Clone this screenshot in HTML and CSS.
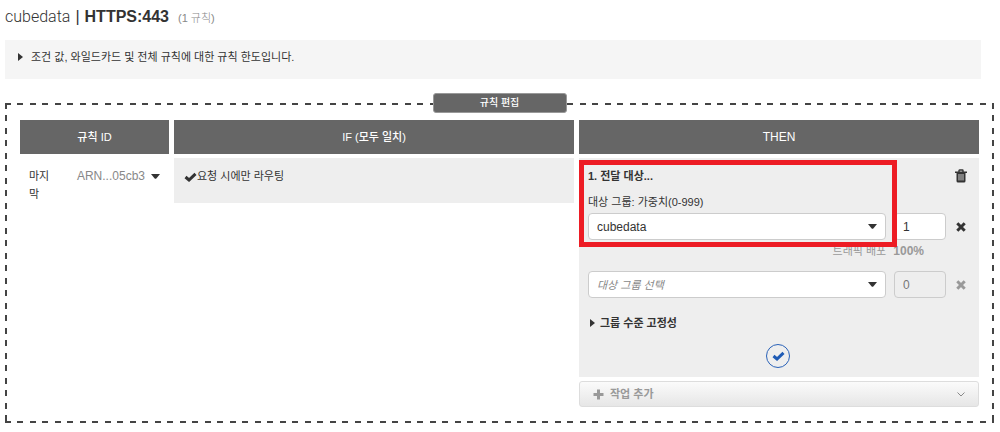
FILE: index.html
```html
<!DOCTYPE html>
<html lang="ko">
<head>
<meta charset="utf-8">
<title>cubedata | HTTPS:443</title>
<link rel="stylesheet" href="styles.css">
</head>
<body>
<main class="page">
  <h1 class="title"><span class="title-name">cubedata</span><span class="title-sep">|</span><strong>HTTPS:443</strong><small>(1 규칙)</small></h1>

  <details class="limits">
    <summary><svg class="tri" viewBox="0 0 5 8" aria-hidden="true"><path d="M0 0L5 4L0 8Z"/></svg>조건 값, 와일드카드 및 전체 규칙에 대한 규칙 한도입니다.</summary>
  </details>

  <section class="editor">
    <h2 class="editor-tag">규칙 편집</h2>
    <table class="rules">
      <colgroup><col class="col-id"><col><col></colgroup>
      <thead>
        <tr><th scope="col">규칙 ID</th><th scope="col">IF (모두 일치)</th><th scope="col" class="latin">THEN</th></tr>
      </thead>
      <tbody>
        <tr>
          <td>
            <div class="rule-id">
              <span class="rule-order">마지막</span>
              <button type="button" class="arn latin">ARN...05cb3<svg class="caret" viewBox="0 0 9 5" aria-hidden="true"><path d="M0 0H9L5.3 4.5Q4.500 5.200 3.700 4.500Z"/></svg></button>
            </div>
          </td>
          <td>
            <div class="condition"><svg class="check" viewBox="0 0 13 10" aria-hidden="true"><path d="M1.500 5L5 8L11.500 1.800"/></svg>요청 시에만 라우팅</div>
          </td>
          <td>
            <div class="action">
              <div class="action-head">
                <h3>1. 전달 대상...</h3>
                <button type="button" class="icon-btn" aria-label="삭제"><svg class="trash" viewBox="0 0 12 14" aria-hidden="true"><path class="trash-body" d="M1.500 4H10.500V12Q10.500 13.500 9 13.500H3Q1.500 13.500 1.500 12Z"/><path class="trash-lid" d="M0 3.300H12M4 3V1.500Q4 1 4.500 1H7.500Q8 1 8 1.500V3"/><path class="trash-slots" d="M4 5V11.500M6 5V11.500M8 5V11.500"/></svg></button>
              </div>
              <label class="group-label" for="group1">대상 그룹: 가중치(0-999)</label>
              <div class="target">
                <span class="select-wrap">
                  <select id="group1" class="field latin"><option>cubedata</option></select>
                  <svg class="caret" viewBox="0 0 9 5" aria-hidden="true"><path d="M0 0H9L5.300 4.500Q4.500 5.200 3.700 4.500Z"/></svg>
                </span>
                <input class="field weight latin" type="text" value="1" aria-label="가중치 1">
                <button type="button" class="icon-btn" aria-label="대상 그룹 제거"><svg class="cross" viewBox="0 0 10 10" aria-hidden="true"><path d="M1.300 1.300L8.700 8.700M8.700 1.300L1.300 8.700"/></svg></button>
              </div>
              <p class="traffic">트래픽 배포 <strong class="latin">100%</strong></p>
              <div class="target">
                <span class="select-wrap">
                  <select class="field placeholder" aria-label="대상 그룹"><option>대상 그룹 선택</option></select>
                  <svg class="caret" viewBox="0 0 9 5" aria-hidden="true"><path d="M0 0H9L5.300 4.500Q4.500 5.200 3.700 4.500Z"/></svg>
                </span>
                <input class="field weight latin" type="text" value="0" aria-label="가중치 2" disabled>
                <button type="button" class="icon-btn" aria-label="대상 그룹 제거" disabled><svg class="cross" viewBox="0 0 10 10" aria-hidden="true"><path d="M1.300 1.300L8.700 8.700M8.700 1.300L1.300 8.700"/></svg></button>
              </div>
              <details class="sticky">
                <summary><svg class="tri" viewBox="0 0 5 8" aria-hidden="true"><path d="M0 0L5 4L0 8Z"/></svg>그룹 수준 고정성</summary>
              </details>
              <button type="button" class="confirm" aria-label="확인"><svg class="check" viewBox="0 0 13 10" aria-hidden="true"><path d="M1.500 5L5 8L11.500 1.800"/></svg></button>
              <span class="highlight"></span>
            </div>
            <button type="button" class="add">
              <svg class="plus" viewBox="0 0 11 11" aria-hidden="true"><path d="M5.500 0.500V10.500M0.500 5.500H10.500"/></svg>
              <span>작업 추가</span>
              <svg class="chevron" viewBox="0 0 8 5" aria-hidden="true"><path d="M0.500 0.500L4 4L7.500 0.500"/></svg>
            </button>
          </td>
        </tr>
      </tbody>
    </table>
  </section>
</main>
</body>
</html>
```
FILE: styles.css
```css
* { box-sizing: border-box; }

body {
  margin: 0;
  background: #fff;
  color: #333;
  font: 11px/18px "Liberation Sans", "Noto Sans CJK KR", sans-serif;
}

h1, h2, h3, p { margin: 0; font-size: inherit; }
button, input, select { font: inherit; color: inherit; }
button { padding: 0; border: 0; background: none; }
svg { display: block; flex: none; }
summary { display: flex; align-items: center; list-style: none; }

.latin { font-size: 12px; }

.page { padding: 7px 6px 8px 5px; }

.title {
  display: flex;
  align-items: baseline;
  font-size: 16px;
  line-height: 20px;
  font-weight: 400;
}
.title-name { font-family: Roboto, "Liberation Sans", sans-serif; font-weight: 300; }
.title-sep { margin: 0 5px; }
.title small {
  margin-left: 9px;
  color: #888;
  font: 300 11px/20px "Liberation Sans", "Noto Sans CJK KR", sans-serif;
}

.limits {
  margin: 12px 13px 24px 0;
  padding: 8px 13px 13px;
  background: #f5f5f5;
}
.tri { width: 5px; height: 8px; margin-right: 8px; fill: #333; }

/* Dashed frame: each 25px tile holds two 6px dashes */
.editor {
  --dash: #444 0 6px, transparent 6px 12px, #444 12px 18px, transparent 18px;
  position: relative;
  padding: 13px 10px 12px;
  background:
    linear-gradient(to right, var(--dash)) left top / 25px 2px repeat-x,
    linear-gradient(to right, var(--dash)) left bottom / 25px 2px repeat-x,
    linear-gradient(to bottom, var(--dash)) left top / 2px 25px repeat-y,
    linear-gradient(to bottom, var(--dash)) right top / 2px 25px repeat-y;
}
.editor-tag {
  position: absolute;
  top: -10px;
  left: 50%;
  width: 134px;
  transform: translateX(-50%);
  border: 1px solid #999;
  border-radius: 3px;
  background: #666;
  color: #fff;
  font-size: 10px;
  font-weight: 500;
  line-height: 18px;
  text-align: center;
}

.rules { width: 100%; table-layout: fixed; border-spacing: 5px 4px; }
.col-id { width: 149px; }
.rules th {
  height: 34px;
  padding: 0;
  background: #666;
  color: #fff;
  font-weight: 500;
}
.rules td { padding: 0; vertical-align: top; }

.rule-id { display: flex; align-items: flex-start; padding: 9px 9px 0; }
.rule-order { width: 22px; margin-right: 27px; word-break: break-all; }
.arn { display: flex; align-items: center; gap: 6px; color: #888; }
.caret { width: 9px; height: 5px; fill: #333; }

.condition {
  display: flex;
  align-items: flex-start;
  min-height: 45px;
  padding: 9px 10px;
  background: #eee;
}
.check { width: 13px; height: 10px; fill: none; stroke: #333; stroke-width: 3; }
.condition .check { margin-top: 5px; }

.action {
  position: relative;
  padding: 9px 11px 9px 9px;
  background: #eee;
}
.action-head { display: flex; justify-content: space-between; }
.icon-btn { display: flex; align-items: center; justify-content: center; width: 14px; }
.trash { width: 12px; height: 14px; }
.trash-body { fill: #333; }
.trash-lid { fill: none; stroke: #333; stroke-width: 1.4; }
.trash-slots { stroke: #ddd; stroke-width: 0.9; }
.cross { width: 10px; height: 10px; stroke: #333; stroke-width: 3; }
.icon-btn:disabled .cross { stroke: #999; }

.group-label { display: block; margin: 8px 0 2px; }
.target { display: flex; gap: 8px; }
.select-wrap { position: relative; flex: 1; }
.select-wrap .caret { position: absolute; right: 9px; top: 11px; pointer-events: none; }
.field {
  display: block;
  width: 100%;
  height: 27px;
  padding: 0 8px;
  border: 1px solid #ccc;
  border-radius: 4px;
  background: #fff;
  appearance: none;
}
.field.weight { width: 52px; }
.field:disabled { background: #eee; color: #777; }
.placeholder { color: #888; font-style: italic; }

.traffic {
  margin: 2px 44px 11px 0;
  color: #999;
  text-align: right;
}
.traffic strong { margin-left: 4px; }

.sticky { margin-top: 16px; padding-left: 2px; font-weight: 700; }
.sticky .tri { margin-right: 5px; }

.confirm {
  display: flex;
  align-items: center;
  justify-content: center;
  width: 24px;
  height: 24px;
  margin: 12px auto 0;
  border: 1px solid #2a62b8;
  border-radius: 50%;
}
.confirm .check { stroke: #1f5bb5; }

.highlight {
  position: absolute;
  top: 2px;
  left: 0;
  right: 82px;
  height: 87px;
  border: 5px solid #ed1c24;
  pointer-events: none;
}

.add {
  display: flex;
  align-items: center;
  gap: 6px;
  width: 100%;
  height: 26px;
  margin-top: 4px;
  padding: 0 13px;
  border: 1px solid #ddd;
  border-radius: 3px;
  background: linear-gradient(#fbfbfb, #e6e6e6);
  color: #999;
  font-weight: 700;
}
.plus { width: 11px; height: 11px; stroke: #999; stroke-width: 3; }
.chevron { width: 8px; height: 5px; margin-left: auto; fill: none; stroke: #888; }
```
